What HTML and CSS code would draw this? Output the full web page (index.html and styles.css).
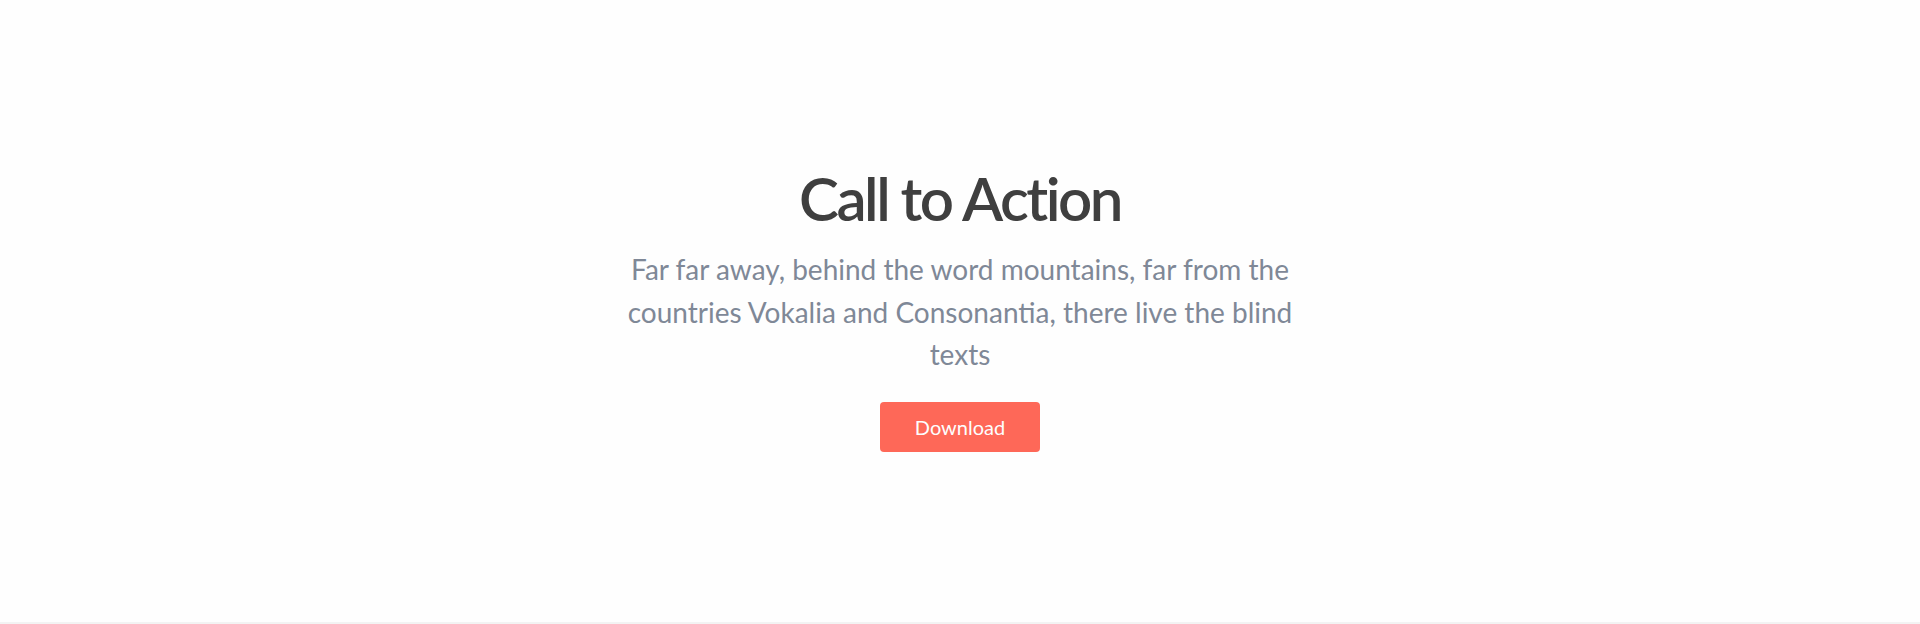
FILE: index.html
```html
<!DOCTYPE html>
<html lang="en">
<head>
<meta charset="utf-8">
<title>Call to Action</title>
<link rel="stylesheet" href="styles.css">
</head>
<body>
<section class="cta">
  <div class="cta-inner">
    <h2 class="cta-title">Call to Action</h2>
    <p class="cta-text">Far far away, behind the word mountains, far from the countries Vokalia and Consonantia, there live the blind texts</p>
    <a class="cta-btn" href="#">Download</a>
  </div>
</section>
</body>
</html>
```

FILE: styles.css
```css
* { box-sizing: border-box; }
html, body {
  margin: 0;
  padding: 0;
  background: #ffffff;
  font-family: Lato, "Open Sans", sans-serif;
}
.cta {
  height: 624px;
  background: #fefefe;
  border-bottom: 2px solid #f3f3f3;
  display: flex;
  justify-content: center;
  padding-top: 162px;
}
.cta-inner {
  width: 700px;
  display: flex;
  flex-direction: column;
  align-items: center;
  text-align: center;
}
.cta-title {
  margin: 0;
  font-size: 60px;
  line-height: 72px;
  font-weight: 600;
  letter-spacing: -2.5px;
  color: #3f3f3f;
}
.cta-text {
  margin: 14px 0 0;
  font-size: 28px;
  line-height: 42.5px;
  color: #7f8897;
}
.cta-btn {
  margin-top: 26px;
  width: 160px;
  height: 50px;
  display: flex;
  align-items: center;
  justify-content: center;
  background: #fe6858;
  color: #fdfdfd;
  font-size: 20px;
  text-decoration: none;
  border-radius: 4px;
}
```
